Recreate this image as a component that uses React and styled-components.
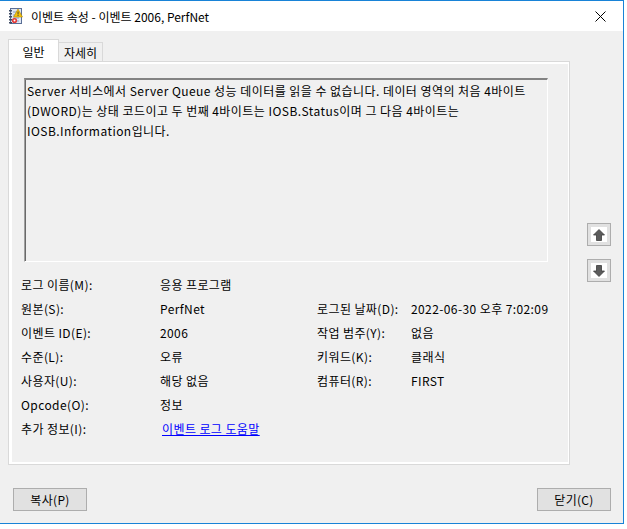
import { Fragment } from 'react';
import styled, { createGlobalStyle } from 'styled-components';

const GlobalStyle = createGlobalStyle`
  html, body {
    margin: 0;
    padding: 0;
    background: #ffffff;
  }
  body {
    font-family: "Noto Sans CJK KR", "Noto Sans", sans-serif;
    font-size: 12px;
    color: #000;
  }
`;

const Window = styled.div`
  width: 623px;
  height: 522px;
  background: #f0f0f0;
  border: 1px solid #1883d7;
  border-left: none;
  display: flex;
  flex-direction: column;
`;

const TitleBar = styled.div`
  height: 30px;
  background: #ffffff;
  display: flex;
  align-items: center;
  padding-left: 8px;
`;

const Title = styled.span`
  margin-left: 7px;
  font-size: 12px;
  flex: 1;
`;

const CloseButton = styled.div`
  width: 46px;
  height: 30px;
  display: flex;
  align-items: center;
  justify-content: center;
`;

const Body = styled.div`
  flex: 1;
  display: flex;
  flex-direction: column;
  padding: 8px 12px 0 8px;
`;

const Main = styled.div`
  display: flex;
  gap: 17px;
`;

const TabArea = styled.div`
  width: 562px;
  display: flex;
  flex-direction: column;
`;

const TabStrip = styled.div`
  display: flex;
  align-items: flex-end;
  height: 23px;
  position: relative;
  z-index: 1;
`;

const Tab = styled.div`
  height: ${(p) => (p.$active ? '23px' : '20px')};
  width: ${(p) => p.$w}px;
  margin-left: ${(p) => (p.$active ? '0' : '-1px')};
  background: ${(p) => (p.$active ? '#ffffff' : '#f0f0f0')};
  border: 1px solid #d9d9d9;
  border-bottom: ${(p) => (p.$active ? 'none' : '1px solid #d9d9d9')};
  box-sizing: border-box;
  display: flex;
  align-items: center;
  justify-content: center;
  white-space: nowrap;
  font-size: 12px;
`;

const TabPanel = styled.div`
  margin-top: -1px;
  height: 404px;
  border: 1px solid #d9d9d9;
  background: #ffffff;
  padding: 2px 1px 2px 3px;
  box-sizing: border-box;
  display: flex;
`;

const Page = styled.div`
  flex: 1;
  background: #f0f0f0;
  display: flex;
  flex-direction: column;
  padding: 14px 20px 0 12px;
`;

const Description = styled.div`
  height: 184px;
  box-sizing: border-box;
  border-style: solid;
  border-width: 2px 1px 1px 1px;
  border-color: #838383 #ffffff #ffffff #a0a0a0;
  box-shadow: inset 1px 0 0 #696969;
  padding: 1px 0 0 2px;
  line-height: 20px;
  font-size: 12px;
  letter-spacing: 0.45px;
  white-space: nowrap;
  overflow: hidden;
`;

const PropGrid = styled.div`
  margin-top: 10px;
  margin-left: -3px;
  display: grid;
  grid-template-columns: 139px 157px 94px 1fr;
  grid-auto-rows: 24px;
  align-items: center;
  letter-spacing: 0.4px;
`;

const Label = styled.span`
  font-size: 12px;
  white-space: nowrap;
`;

const Value = styled.span`
  font-size: 12px;
  white-space: nowrap;
`;

const HelpLink = styled.a`
  color: #0000ff;
  text-decoration: underline;
  margin-left: 2px;
  font-size: 12px;
`;

const Side = styled.div`
  display: flex;
  flex-direction: column;
  gap: 13px;
  padding-top: 184px;
`;

const ArrowButton = styled.div`
  width: 24px;
  height: 23px;
  box-sizing: border-box;
  border: 1px solid #adadad;
  background: #e1e1e1;
  display: flex;
  align-items: center;
  justify-content: center;
`;

const ArrowInner = styled.div`
  width: 16px;
  height: 15px;
  background: #ffffff;
  display: flex;
  align-items: center;
  justify-content: center;
`;

const Footer = styled.div`
  display: flex;
  justify-content: space-between;
  padding: 23px 0 0 5px;
`;

const Button = styled.div`
  width: 74px;
  height: 23px;
  box-sizing: border-box;
  border: 1px solid #adadad;
  background: #e1e1e1;
  display: flex;
  align-items: center;
  justify-content: center;
  font-size: 12px;
  letter-spacing: 0.3px;
`;

const Backdrop = styled.div`
  height: 6px;
  background: #ffffff;
`;

const EventIcon = () => (
  <svg width="16" height="17" viewBox="0 0 16 17">
    <rect x="2.5" y="0.5" width="11" height="15" fill="#dfe6f3" stroke="#5a6f96" />
    <line x1="5" y1="4" x2="11" y2="4" stroke="#8aa0c6" />
    <line x1="5" y1="7" x2="11" y2="7" stroke="#8aa0c6" />
    <line x1="5" y1="10" x2="11" y2="10" stroke="#8aa0c6" />
    <line x1="5" y1="13" x2="11" y2="13" stroke="#8aa0c6" />
    {[2, 5, 8, 11, 14].map((y) => (
      <rect key={y} x="1" y={y} width="3" height="1.5" fill="#3d4a63" />
    ))}
    <path d="M10 1 L14.5 9 L5.5 9 Z" fill="#f4c20d" stroke="#b48a00" strokeWidth="0.6" />
    <rect x="9.6" y="3.5" width="0.9" height="3" fill="#333" />
    <rect x="9.6" y="7" width="0.9" height="0.9" fill="#333" />
    <circle cx="6.5" cy="12.5" r="2.6" fill="#e53935" />
    <circle cx="6.5" cy="12.5" r="1" fill="#ffffff" />
  </svg>
);

const CloseIcon = () => (
  <svg width="11" height="11" viewBox="0 0 11 11">
    <path d="M0.5 0.5 L10.5 10.5 M10.5 0.5 L0.5 10.5" stroke="#000" strokeWidth="1" />
  </svg>
);

const ArrowIcon = ({ down }) => (
  <svg width="12" height="12" viewBox="0 0 12 12" style={down ? { transform: 'rotate(180deg)' } : undefined}>
    <path d="M6 0.5 L11.5 6 L8.5 6 L8.5 11.5 L3.5 11.5 L3.5 6 L0.5 6 Z" fill="#5b5b5b" stroke="#3c3c3c" strokeWidth="0.8" />
  </svg>
);

const rows = [
  ['로그 이름(M):', '응용 프로그램', '', ''],
  ['원본(S):', 'PerfNet', '로그된 날짜(D):', '2022-06-30 오후 7:02:09'],
  ['이벤트 ID(E):', '2006', '작업 범주(Y):', '없음'],
  ['수준(L):', '오류', '키워드(K):', '클래식'],
  ['사용자(U):', '해당 없음', '컴퓨터(R):', 'FIRST'],
  ['Opcode(O):', '정보', '', ''],
];

export default function App() {
  return (
    <>
      <GlobalStyle />
      <Window>
        <TitleBar>
          <EventIcon />
          <Title>이벤트 속성 - 이벤트 2006, PerfNet</Title>
          <CloseButton>
            <CloseIcon />
          </CloseButton>
        </TitleBar>
        <Body>
          <Main>
            <TabArea>
              <TabStrip>
                <Tab $active $w={51}>일반</Tab>
                <Tab $w={45}>자세히</Tab>
              </TabStrip>
              <TabPanel>
                <Page>
                  <Description>
                    Server 서비스에서 Server Queue 성능 데이터를 읽을 수 없습니다. 데이터 영역의 처음 4바이트
                    <br />
                    (DWORD)는 상태 코드이고 두 번째 4바이트는 IOSB.Status이며 그 다음 4바이트는
                    <br />
                    IOSB.Information입니다.
                  </Description>
                  <PropGrid>
                    {rows.map((r) => (
                      <Fragment key={r[0]}>
                        <Label>{r[0]}</Label>
                        <Value>{r[1]}</Value>
                        <Label>{r[2]}</Label>
                        <Value>{r[3]}</Value>
                      </Fragment>
                    ))}
                    <Label>추가 정보(I):</Label>
                    <span>
                      <HelpLink href="#">이벤트 로그 도움말</HelpLink>
                    </span>
                  </PropGrid>
                </Page>
              </TabPanel>
            </TabArea>
            <Side>
              <ArrowButton>
                <ArrowInner>
                  <ArrowIcon />
                </ArrowInner>
              </ArrowButton>
              <ArrowButton>
                <ArrowInner>
                  <ArrowIcon down />
                </ArrowInner>
              </ArrowButton>
            </Side>
          </Main>
          <Footer>
            <Button>복사(P)</Button>
            <Button>닫기(C)</Button>
          </Footer>
        </Body>
      </Window>
      <Backdrop />
    </>
  );
}
